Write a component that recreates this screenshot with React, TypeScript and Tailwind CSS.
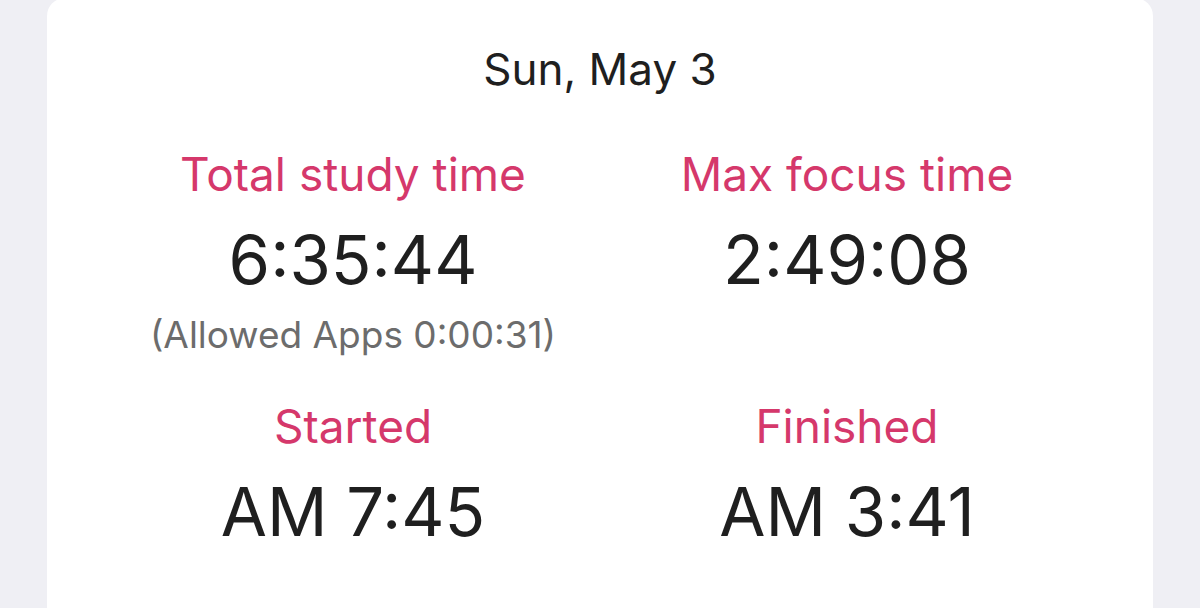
const pink = 'text-[#d5386b]'

function Stat({
  label,
  value,
  note,
}: {
  label: string
  value: string
  note?: string
}) {
  return (
    <div className="flex flex-col items-center">
      <p className={`text-[46px] leading-[60px] ${pink}`}>{label}</p>
      <p className="mt-[18px] text-[67px] leading-[76px] text-[#1f1f1f]">{value}</p>
      <p className="mt-[15px] h-[44px] text-[37px] leading-[44px] text-[#6c6c6c]">{note}</p>
    </div>
  )
}

export default function App() {
  return (
    <div
      className="min-h-[608px] h-[608px] overflow-hidden bg-[#efeff4] px-[47px]"
      style={{ fontFamily: 'Inter, "Noto Sans", sans-serif' }}
    >
      <div className="-mt-[2px] h-[640px] rounded-[18px] bg-white px-[59px] pt-[41px]">
        <p className="text-center text-[44px] leading-[60px] text-[#1f1f1f]">Sun, May 3</p>
        <div className="mt-[45px] grid grid-cols-2">
          <Stat label="Total study time" value="6:35:44" note="(Allowed Apps 0:00:31)" />
          <Stat label="Max focus time" value="2:49:08" />
        </div>
        <div className="mt-[39px] grid grid-cols-2">
          <Stat label="Started" value="AM 7:45" />
          <Stat label="Finished" value="AM 3:41" />
        </div>
      </div>
    </div>
  )
}
